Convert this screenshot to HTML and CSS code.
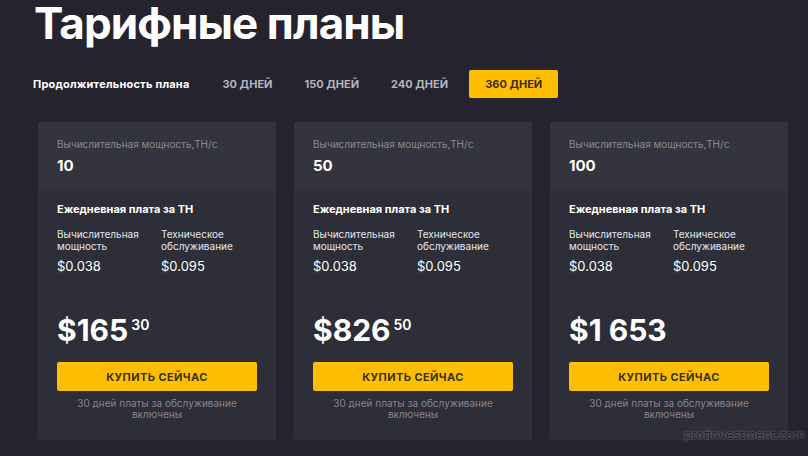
FILE: index.html
```html
<!DOCTYPE html>
<html lang="ru">
<head>
  <meta charset="UTF-8">
  <title>Тарифные планы</title>
  <link rel="stylesheet" href="styles.css">
</head>
<body>
  <div class="page">
    <h1>Тарифные планы</h1>

    <!-- Plan duration -->
    <div class="tabs">
      <span class="tabs-label">Продолжительность плана</span>
      <span class="tab">30 ДНЕЙ</span>
      <span class="tab">150 ДНЕЙ</span>
      <span class="tab">240 ДНЕЙ</span>
      <span class="tab active">360 ДНЕЙ</span>
    </div>

    <!-- Plans -->
    <div class="cards">
      <div class="card">
        <div class="card-top">
          <div class="muted">Вычислительная мощность,ТН/с</div>
          <div class="power">10</div>
        </div>
        <div class="card-body">
          <div class="fee-title">Ежедневная плата за ТН</div>
          <div class="fees">
            <div>
              <div class="fee-label">Вычислительная мощность</div>
              <div class="fee-value">$0.038</div>
            </div>
            <div>
              <div class="fee-label">Техническое обслуживание</div>
              <div class="fee-value">$0.095</div>
            </div>
          </div>
          <div class="price">$165<sup>30</sup></div>
          <button class="buy">КУПИТЬ СЕЙЧАС</button>
          <p class="note">30 дней платы за обслуживание включены</p>
        </div>
      </div>

      <div class="card">
        <div class="card-top">
          <div class="muted">Вычислительная мощность,ТН/с</div>
          <div class="power">50</div>
        </div>
        <div class="card-body">
          <div class="fee-title">Ежедневная плата за ТН</div>
          <div class="fees">
            <div>
              <div class="fee-label">Вычислительная мощность</div>
              <div class="fee-value">$0.038</div>
            </div>
            <div>
              <div class="fee-label">Техническое обслуживание</div>
              <div class="fee-value">$0.095</div>
            </div>
          </div>
          <div class="price">$826<sup>50</sup></div>
          <button class="buy">КУПИТЬ СЕЙЧАС</button>
          <p class="note">30 дней платы за обслуживание включены</p>
        </div>
      </div>

      <div class="card">
        <div class="card-top">
          <div class="muted">Вычислительная мощность,ТН/с</div>
          <div class="power">100</div>
        </div>
        <div class="card-body">
          <div class="fee-title">Ежедневная плата за ТН</div>
          <div class="fees">
            <div>
              <div class="fee-label">Вычислительная мощность</div>
              <div class="fee-value">$0.038</div>
            </div>
            <div>
              <div class="fee-label">Техническое обслуживание</div>
              <div class="fee-value">$0.095</div>
            </div>
          </div>
          <div class="price">$1 653</div>
          <button class="buy">КУПИТЬ СЕЙЧАС</button>
          <p class="note">30 дней платы за обслуживание включены</p>
        </div>
      </div>
    </div>
  </div>

  <span class="watermark">profinvestment.com</span>
</body>
</html>
```

FILE: styles.css
```css
body {
  margin: 0;
  background: #25242e;
  color: #fff;
  font-family: Inter, "Open Sans", sans-serif;
  overflow: hidden;
}

.page {
  padding: 0 20px 0 34px;
}

h1 {
  margin: 0;
  font-size: 44px;
  line-height: 46px;
  font-weight: 700;
  letter-spacing: -0.9px;
}

.tabs {
  display: flex;
  align-items: center;
  margin-top: 24px;
  height: 28px;
  font-size: 11px;
  font-weight: 700;
  letter-spacing: 0.2px;
}

.tabs-label {
  margin-left: -1px;
  margin-right: 33px;
}

.tab {
  color: #b4b4bc;
  margin-right: 32px;
  letter-spacing: 0;
}

.tab.active {
  margin-left: -11px;
  background: #ffbe00;
  color: #3b3113;
  padding: 0 16px;
  line-height: 28px;
  border-radius: 2px;
}

.cards {
  display: flex;
  gap: 18px;
  margin: 24px 0 0 4px;
}

.card {
  width: 238px;
  height: 318px;
  background: #2e2e38;
  border-radius: 2px;
}

.card-top {
  background: #34343e;
  padding: 15px 19px 15px;
}

.muted {
  color: #8a8a95;
  font-size: 10px;
  line-height: 14px;
}

.power {
  margin-top: 5px;
  font-size: 15px;
  font-weight: 700;
  line-height: 20px;
}

.card-body {
  padding: 11px 19px 0;
}

.fee-title {
  font-size: 11px;
  font-weight: 700;
  line-height: 14px;
}

.fees {
  display: flex;
  margin-top: 12px;
}

.fees > div {
  flex: none;
  width: 104px;
}

.fee-label {
  font-size: 10px;
  line-height: 12px;
  color: #e6e6ea;
  width: 92px;
}

.fee-value {
  margin-top: 6px;
  font-size: 13px;
  line-height: 16px;
}

.price {
  margin-top: 39px;
  height: 34px;
  font-size: 30px;
  font-weight: 700;
  line-height: 34px;
}

.price sup {
  font-size: 14px;
  font-weight: 600;
  vertical-align: 11px;
  line-height: 0;
  margin-left: 3px;
}

.buy {
  display: block;
  width: 200px;
  height: 29px;
  margin-top: 15px;
  border: none;
  border-radius: 2px;
  background: #ffbe00;
  color: #3b3113;
  font-family: inherit;
  font-size: 11px;
  font-weight: 700;
  letter-spacing: 0.4px;
}

.note {
  margin: 7px auto 0;
  width: 180px;
  text-align: center;
  color: #85858f;
  font-size: 10px;
  line-height: 11px;
}

.watermark {
  position: absolute;
  left: 684px;
  top: 428px;
  font-family: "DejaVu Sans", sans-serif;
  font-size: 12px;
  color: #1c1c22;
  text-shadow: 0 0 2px #9a9aa5;
}
```
